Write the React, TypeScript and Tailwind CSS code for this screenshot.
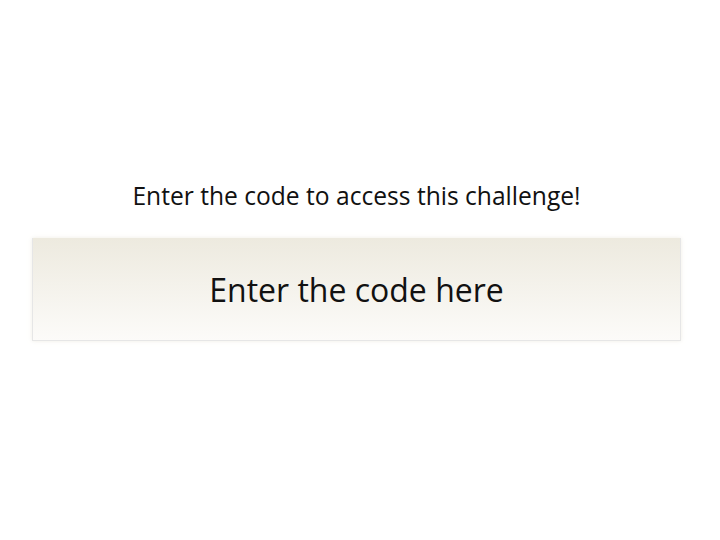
export default function App() {
  return (
    <div className="min-h-[540px] w-full bg-white pt-[178px] font-['Open_Sans',sans-serif] text-[#111]">
      <div className="ml-8 flex w-[649px] flex-col items-center">
        <p className="text-[24.6px] leading-[36px]">Enter the code to access this challenge!</p>
        <div className="mt-[24px] w-full shadow-[0_0_4px_rgba(230,225,210,0.6)]">
          <input
            type="text"
            placeholder="Enter the code here"
            className="block h-[103px] w-full border border-t-0 border-[#e6e6e6] bg-gradient-to-b from-[#edeadf] to-[#fcfbf9] text-center text-[32px] text-[#111] outline-none placeholder:text-[#111]"
          />
        </div>
      </div>
    </div>
  );
}
